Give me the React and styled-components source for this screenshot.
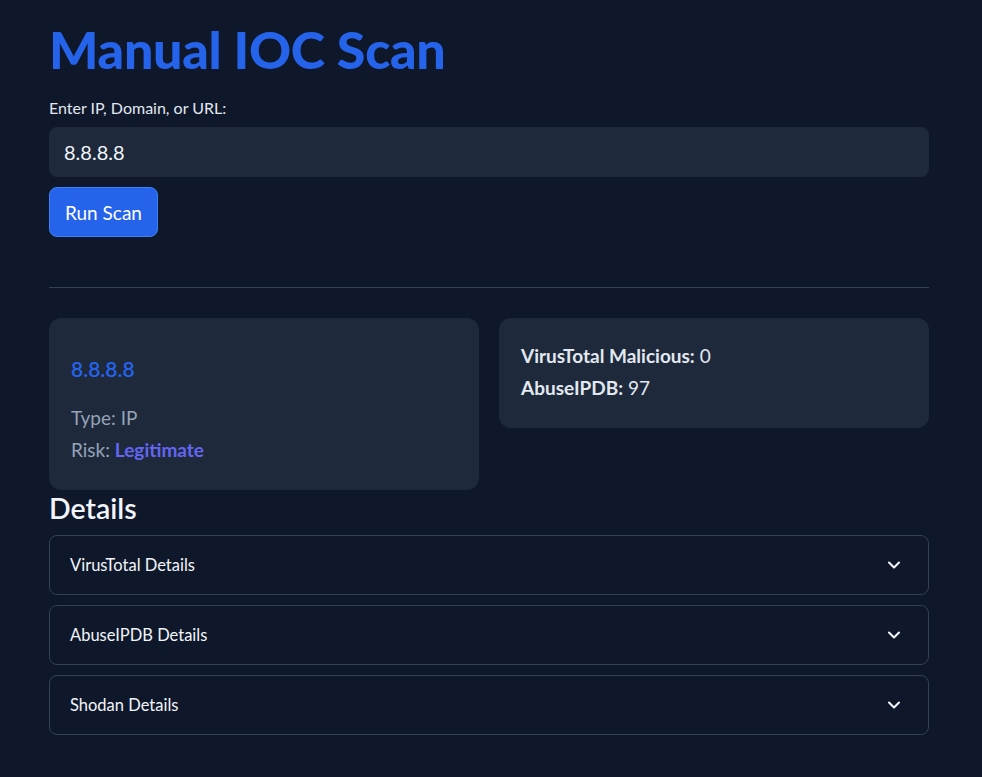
import React from "react";
import styled, { createGlobalStyle } from "styled-components";

const GlobalStyle = createGlobalStyle`
  html, body {
    margin: 0;
    padding: 0;
    background: #0f172a;
  }
  body {
    font-family: "Source Sans Pro", Lato, "Noto Sans", sans-serif;
    color: #e2e8f0;
  }
  * {
    box-sizing: border-box;
  }
`;

const Page = styled.main`
  width: 880px;
  margin-left: 49px;
  padding-top: 14px;
  padding-bottom: 40px;
`;

const Title = styled.h1`
  margin: 0;
  font-size: 52px;
  font-weight: 900;
  color: #2563eb;
  line-height: 70px;
  letter-spacing: -0.3px;
`;

const Label = styled.label`
  display: block;
  margin-top: 14px;
  font-size: 16px;
  line-height: 20px;
  color: #e2e8f0;
`;

const Input = styled.input`
  display: block;
  width: 100%;
  height: 50px;
  margin-top: 9px;
  padding: 0 15px;
  border: none;
  border-radius: 8px;
  background: #1e293b;
  color: #f1f5f9;
  font-family: inherit;
  font-size: 20px;
  outline: none;
`;

const Button = styled.button`
  display: block;
  margin-top: 10px;
  height: 50px;
  padding: 0 15px;
  border: 1px solid #3b82f6;
  border-radius: 8px;
  background: #2563eb;
  color: #ffffff;
  font-family: inherit;
  font-size: 19px;
`;

const Divider = styled.hr`
  margin: 50px 0 30px;
  border: none;
  border-top: 1px solid #334155;
`;

const CardRow = styled.div`
  display: grid;
  grid-template-columns: 1fr 1fr;
  gap: 20px;
  align-items: start;
`;

const Card = styled.div`
  background: #1e293b;
  border-radius: 12px;
  padding: ${(p) => p.$pad || "22px"};
`;

const Ioc = styled.div`
  font-size: 21px;
  font-weight: 600;
  color: #2563eb;
  line-height: 26px;
  margin-bottom: 20px;
`;

const Meta = styled.div`
  font-size: 19px;
  line-height: 32px;
  color: #94a3b8;
`;

const Risk = styled.span`
  color: #6366f1;
  font-weight: 700;
`;

const Stat = styled.div`
  font-size: 19px;
  line-height: 32px;
  color: #e2e8f0;

  b {
    font-weight: 700;
  }
`;

const Heading = styled.h2`
  margin: 0 0 9px;
  font-size: 28.5px;
  font-weight: 600;
  line-height: 36px;
  color: #f1f5f9;
`;

const Expanders = styled.div`
  display: flex;
  flex-direction: column;
  gap: 10px;
`;

const Expander = styled.div`
  height: 60px;
  border: 1px solid #334155;
  border-radius: 8px;
  display: flex;
  align-items: center;
  justify-content: space-between;
  padding: 0 24px 0 20px;
  font-size: 16.5px;
  color: #f1f5f9;
`;

const Chevron = () => (
  <svg width="20" height="20" viewBox="0 0 24 24" fill="none" stroke="#f1f5f9" strokeWidth="2.5" strokeLinecap="round" strokeLinejoin="round">
    <path d="M6 9l6 6 6-6" />
  </svg>
);

const sections = ["VirusTotal Details", "AbuseIPDB Details", "Shodan Details"];

export default function App() {
  return (
    <>
      <GlobalStyle />
      <Page>
        <Title>Manual IOC Scan</Title>
        <Label>Enter IP, Domain, or URL:</Label>
        <Input defaultValue="8.8.8.8" />
        <Button>Run Scan</Button>
        <Divider />
        <CardRow>
          <Card $pad="38px 22px 24px">
            <Ioc>8.8.8.8</Ioc>
            <Meta>Type: IP</Meta>
            <Meta>
              Risk: <Risk>Legitimate</Risk>
            </Meta>
          </Card>
          <Card $pad="22px 22px 24px">
            <Stat>
              <b>VirusTotal Malicious:</b> 0
            </Stat>
            <Stat>
              <b>AbuseIPDB:</b> 97
            </Stat>
          </Card>
        </CardRow>
        <Heading>Details</Heading>
        <Expanders>
          {sections.map((s) => (
            <Expander key={s}>
              <span>{s}</span>
              <Chevron />
            </Expander>
          ))}
        </Expanders>
      </Page>
    </>
  );
}
